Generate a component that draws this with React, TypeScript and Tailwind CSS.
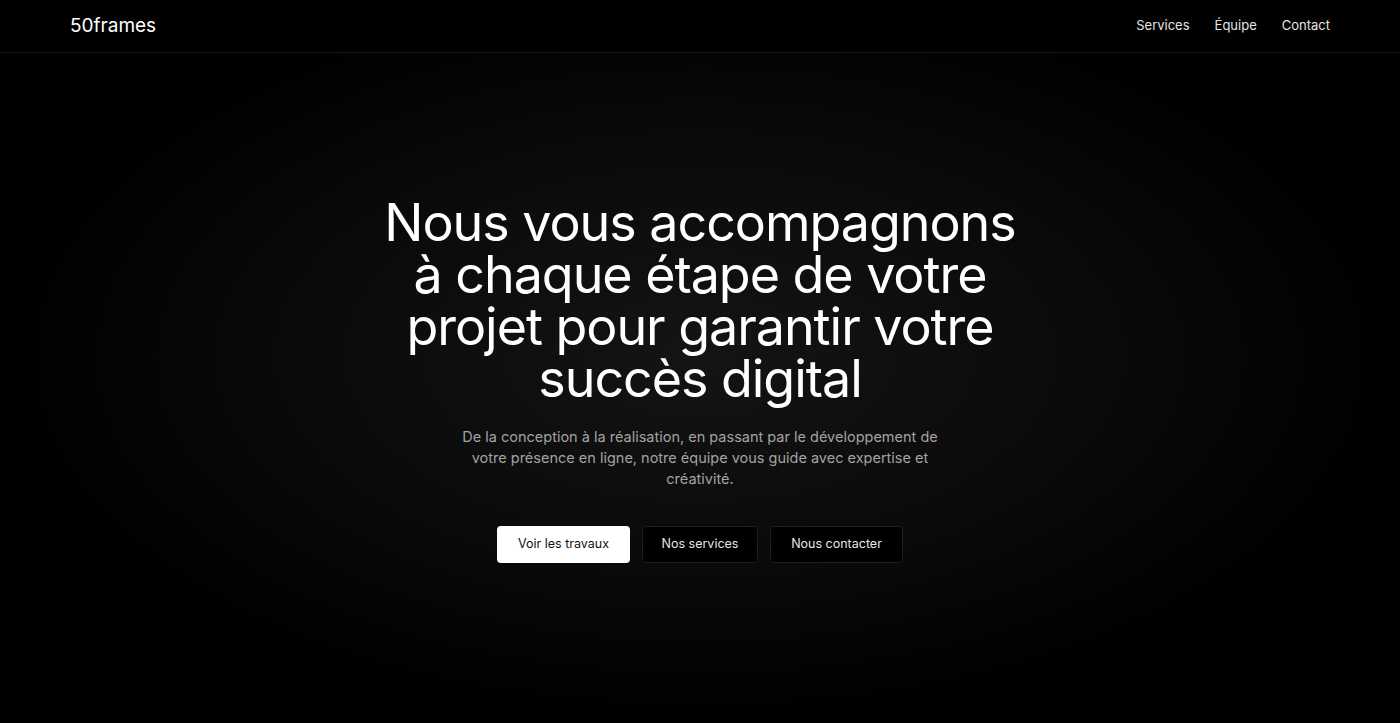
export default function App() {
  const font = { fontFamily: 'Inter, "Noto Sans", sans-serif' };
  return (
    <div className="min-h-screen w-full bg-black text-white" style={font}>
      <header className="flex h-[53px] items-center justify-between border-b border-[#161616] px-[70px]">
        <div className="text-[19px] text-white">50frames</div>
        <nav className="flex items-center gap-[25px] text-[13px] text-[#e5e5e5]">
          <a>Services</a>
          <a>Équipe</a>
          <a>Contact</a>
        </nav>
      </header>
      <main className="flex h-[670px] flex-col items-center bg-[radial-gradient(ellipse_at_50%_45%,#141414_0%,#0a0a0a_40%,#000_70%)] pt-[144px]">
        <h1 className="text-center text-[52px] leading-[52px] font-normal tracking-[-0.02em] text-white">
          Nous vous accompagnons
          <br />à chaque étape de votre
          <br />projet pour garantir votre
          <br />succès digital
        </h1>
        <p className="mt-[21px] text-center text-[14.5px] leading-[21px] text-[#a3a3a3]">
          De la conception à la réalisation, en passant par le développement de
          <br />votre présence en ligne, notre équipe vous guide avec expertise et
          <br />créativité.
        </p>
        <div className="mt-[37px] flex gap-[12px] text-[12.5px]">
          <button className="h-[37px] w-[133px] rounded-[4px] bg-white text-[#111]">Voir les travaux</button>
          <button className="h-[37px] w-[116px] rounded-[4px] border border-[#1f1f1f] bg-black text-[#e5e5e5]">Nos services</button>
          <button className="h-[37px] w-[133px] rounded-[4px] border border-[#1f1f1f] bg-black text-[#e5e5e5]">Nous contacter</button>
        </div>
      </main>
    </div>
  );
}
